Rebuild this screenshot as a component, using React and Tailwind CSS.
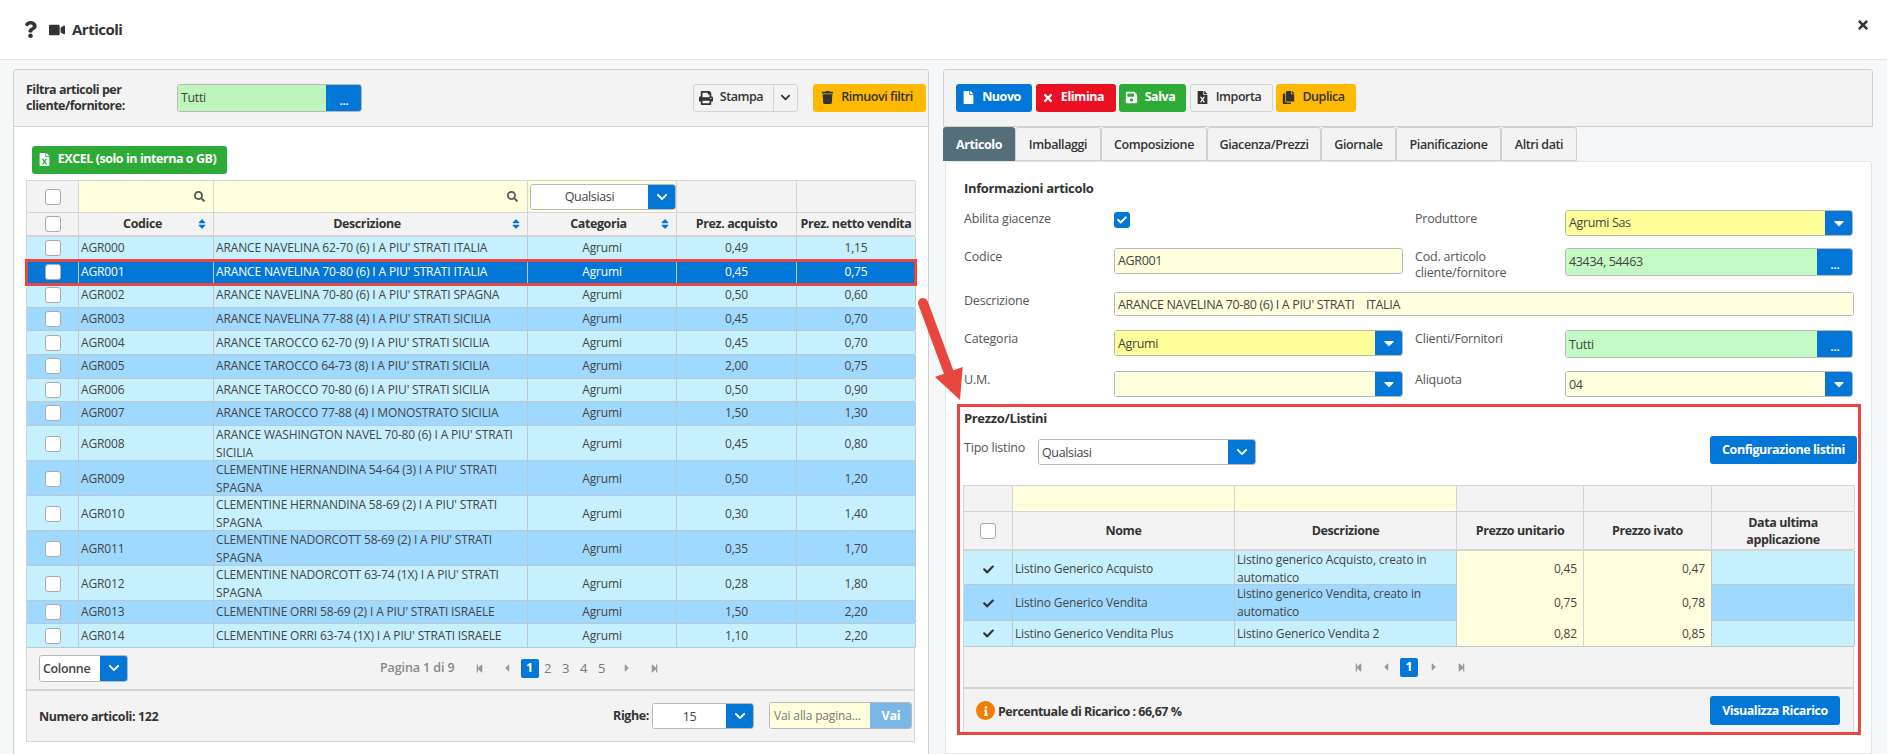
import {
  FaQuestion, FaVideo, FaTimes, FaPrint, FaChevronDown, FaTrash, FaFile, FaSave, FaFileExcel,
  FaCopy, FaSearch, FaSort, FaCheck, FaStepBackward, FaStepForward, FaCaretLeft, FaCaretRight,
  FaCaretDown, FaInfo,
} from 'react-icons/fa'

const articoli = [
  ['AGR000', 'ARANCE NAVELINA 62-70 (6) I A PIU\' STRATI ITALIA', '0,49', '1,15'],
  ['AGR001', 'ARANCE NAVELINA 70-80 (6) I A PIU\' STRATI ITALIA', '0,45', '0,75'],
  ['AGR002', 'ARANCE NAVELINA 70-80 (6) I A PIU\' STRATI SPAGNA', '0,50', '0,60'],
  ['AGR003', 'ARANCE NAVELINA 77-88 (4) I A PIU\' STRATI SICILIA', '0,45', '0,70'],
  ['AGR004', 'ARANCE TAROCCO 62-70 (9) I A PIU\' STRATI SICILIA', '0,45', '0,70'],
  ['AGR005', 'ARANCE TAROCCO 64-73 (8) I A PIU\' STRATI SICILIA', '2,00', '0,75'],
  ['AGR006', 'ARANCE TAROCCO 70-80 (6) I A PIU\' STRATI SICILIA', '0,50', '0,90'],
  ['AGR007', 'ARANCE TAROCCO 77-88 (4) I MONOSTRATO SICILIA', '1,50', '1,30'],
  ['AGR008', 'ARANCE WASHINGTON NAVEL 70-80 (6) I A PIU\' STRATI SICILIA', '0,45', '0,80'],
  ['AGR009', 'CLEMENTINE HERNANDINA 54-64 (3) I A PIU\' STRATI SPAGNA', '0,50', '1,20'],
  ['AGR010', 'CLEMENTINE HERNANDINA 58-69 (2) I A PIU\' STRATI SPAGNA', '0,30', '1,40'],
  ['AGR011', 'CLEMENTINE NADORCOTT 58-69 (2) I A PIU\' STRATI SPAGNA', '0,35', '1,70'],
  ['AGR012', 'CLEMENTINE NADORCOTT 63-74 (1X) I A PIU\' STRATI SPAGNA', '0,28', '1,80'],
  ['AGR013', 'CLEMENTINE ORRI 58-69 (2) I A PIU\' STRATI ISRAELE', '1,50', '2,20'],
  ['AGR014', 'CLEMENTINE ORRI 63-74 (1X) I A PIU\' STRATI ISRAELE', '1,10', '2,20'],
]

const listini = [
  ['Listino Generico Acquisto', 'Listino generico Acquisto, creato in automatico', '0,45', '0,47'],
  ['Listino Generico Vendita', 'Listino generico Vendita, creato in automatico', '0,75', '0,78'],
  ['Listino Generico Vendita Plus', 'Listino Generico Vendita 2', '0,82', '0,85'],
]

const grigliaArticoli = 'grid grid-cols-[52px_135px_314px_149px_120px_119px]'
const grigliaListini = 'grid grid-cols-[49px_222px_222px_127px_128px_143px]'

function Box() {
  return <span className="block w-4 h-4 bg-white border border-[#aaa] rounded-[3px]" />
}

function Btn({ icon, children, className }) {
  return (
    <button className={`h-7 rounded-[3px] flex items-center justify-center gap-[7px] text-[12.5px] font-bold tracking-[-0.45px] ${icon && children ? 'pr-[5px]' : ''} ${className}`}>
      {icon}
      {children}
    </button>
  )
}

function Control({ value, bg = 'bg-[#ffffdd]', btn = 'chevron', className = '', center = false }) {
  return (
    <div className={`flex border border-[#b8b8b8] rounded-[3px] overflow-hidden ${className}`}>
      <div className={`flex-1 flex items-center px-[3px] pt-[2px] text-[#444] text-[12.5px] tracking-[-0.35px] ${bg} ${center ? 'justify-center' : ''}`}>{value}</div>
      {btn === 'chevron' && (
        <div className="w-[28px] -my-px -mr-px bg-[#0277d8] flex items-center justify-center text-white"><FaChevronDown size={12} /></div>
      )}
      {btn === 'caret' && (
        <div className="w-[28px] -my-px -mr-px bg-[#0277d8] flex items-center justify-center text-white"><FaCaretDown size={16} /></div>
      )}
      {btn === 'dots' && (
        <div className="w-[36px] -my-px -mr-px bg-[#0277d8] flex items-end justify-center pb-[6px] text-white text-[11px] font-bold leading-none">...</div>
      )}
    </div>
  )
}

function Pager({ pages }) {
  return (
    <div className="flex items-center text-[#999] text-[13px]">
      <FaStepBackward size={9} className="mr-[17px]" />
      <FaCaretLeft size={12} className="mr-[8px]" />
      <span className="w-[18px] h-[19px] bg-[#0277d8] rounded-[2px] text-white font-bold text-[12.5px] flex items-center justify-center">1</span>
      {pages.map(p => (
        <span key={p} className="w-[18px] text-center text-[#777]">{p}</span>
      ))}
      <FaCaretRight size={12} className="ml-[10px]" />
      <FaStepForward size={9} className="ml-[17px]" />
    </div>
  )
}

function Field({ label, children, className = '' }) {
  return (
    <div className={`flex items-start ${className}`}>
      <span className="w-[150px] shrink-0 text-[12.5px] leading-[16px] pt-px text-[#555] tracking-[-0.2px]">{label}</span>
      {children}
    </div>
  )
}

function Articoli() {
  return (
    <div className="w-[889px] border-t border-l border-[#d5d5d5] text-[12px] text-[#444]">
      <div className={`${grigliaArticoli} h-[32px] border-b border-[#d5d5d5]`}>
        <div className="bg-[#f3f3f3] border-r border-[#d5d5d5] flex items-center justify-center"><Box /></div>
        <div className="bg-[#ffffdd] border-r border-[#d5d5d5] flex items-center justify-end pr-[8px] text-[#555]"><FaSearch size={11} /></div>
        <div className="bg-[#ffffdd] border-r border-[#d5d5d5] flex items-center justify-end pr-[9px] text-[#555]"><FaSearch size={11} /></div>
        <div className="bg-[#ffffdd] border-r border-[#d5d5d5] flex items-center pl-[2px]">
          <Control value="Qualsiasi" bg="bg-white" center className="w-[146px] h-[26px]" />
        </div>
        <div className="bg-[#f3f3f3] border-r border-[#d5d5d5]" />
        <div className="bg-[#f3f3f3] border-r border-[#d5d5d5]" />
      </div>
      <div className={`${grigliaArticoli} h-[24px] border-b-2 border-[#d5d5d5] bg-[#f3f3f3] font-bold text-[12.5px] text-[#333] tracking-[-0.4px]`}>
        <div className="border-r border-[#d5d5d5] flex items-center justify-center"><Box /></div>
        {['Codice', 'Descrizione', 'Categoria'].map(t => (
          <div key={t} className="relative border-r border-[#d5d5d5] flex items-center justify-center pr-[7px]">
            {t}
            <FaSort size={12} className="absolute right-[5px] text-[#0277d8]" />
          </div>
        ))}
        <div className="border-r border-[#d5d5d5] flex items-center justify-center">Prez. acquisto</div>
        <div className="border-r border-[#d5d5d5] flex items-center justify-center">Prez. netto vendita</div>
      </div>
      {articoli.map((r, i) => {
        const selected = i === 1
        const two = r[1].length > 52
        return (
          <div
            key={r[0]}
            className={`${grigliaArticoli} border-b border-[#bcc8d0] ${two ? 'h-[35px]' : 'h-[23.6px]'} ${selected ? 'relative z-10 bg-[#0277d8] text-white outline-[3px] outline-[#e8463f] -outline-offset-1' : i % 2 ? 'bg-[#a0d9ff]' : 'bg-[#c7f0ff]'}`}
          >
            <div className="border-r border-[#bcc8d0] flex items-center justify-center"><Box /></div>
            <div className="border-r border-[#bcc8d0] flex items-center pl-[2px]">{r[0]}</div>
            <div className="border-r border-[#bcc8d0] flex items-center pl-[2px] leading-[18px]">{r[1]}</div>
            <div className="border-r border-[#bcc8d0] flex items-center justify-center">Agrumi</div>
            <div className="border-r border-[#bcc8d0] flex items-center justify-center">{r[2]}</div>
            <div className="border-r border-[#bcc8d0] flex items-center justify-center">{r[3]}</div>
          </div>
        )
      })}
      <div className="h-[43px] bg-[#f3f3f3] border-b-2 border-r border-[#d5d5d5] flex items-center pl-[12px]">
        <Control value={<span className="font-semibold">Colonne</span>} bg="bg-white" className="w-[89px] h-[27px]" />
        <span className="ml-[252px] mr-[20px] text-[12.5px] font-semibold text-[#888] tracking-[-0.1px]">Pagina 1 di 9</span>
        <Pager pages={[2, 3, 4, 5]} />
      </div>
      <div className="h-[51px] bg-[#f3f3f3] border-b border-r border-[#d5d5d5] flex items-center pl-[12px] pr-[2px]">
        <span className="text-[12.5px] font-bold text-[#333] tracking-[-0.4px] whitespace-nowrap pt-[3px]">Numero articoli: 122</span>
        <span className="ml-auto mr-[3px] text-[12.5px] font-bold text-[#333] tracking-[-0.4px]">Righe:</span>
        <Control value="15" bg="bg-white" center className="w-[102px] h-[26px]" />
        <div className="ml-[15px] w-[143px] h-[27px] flex rounded-[3px] overflow-hidden border border-[#b8b8b8]">
          <span className="flex-1 bg-[#ffffdd] flex items-center px-[4px] text-[12px] text-[#777] whitespace-nowrap">Vai alla pagina...</span>
          <span className="w-[42px] shrink-0 -my-px -mr-px bg-[#7ab6e8] text-white font-bold text-[12.5px] flex items-center justify-center">Vai</span>
        </div>
      </div>
    </div>
  )
}

function Listini() {
  return (
    <div className="w-[891px] border-t border-l border-[#d5d5d5] text-[12px] text-[#444]">
      <div className={`${grigliaListini} h-[26px] border-b border-[#d5d5d5]`}>
        <div className="bg-[#f3f3f3] border-r border-[#d5d5d5]" />
        <div className="bg-[#ffffdd] border-r border-[#d5d5d5]" />
        <div className="bg-[#ffffdd] border-r border-[#d5d5d5]" />
        <div className="bg-[#f3f3f3] border-r border-[#d5d5d5]" />
        <div className="bg-[#f3f3f3] border-r border-[#d5d5d5]" />
        <div className="bg-[#f3f3f3] border-r border-[#d5d5d5]" />
      </div>
      <div className={`${grigliaListini} h-[38.7px] border-b-2 border-[#d5d5d5] bg-[#f3f3f3] font-bold text-[12.5px] text-[#333] text-center leading-[17px] tracking-[-0.4px]`}>
        <div className="border-r border-[#d5d5d5] flex items-center justify-center"><Box /></div>
        {['Nome', 'Descrizione', 'Prezzo unitario', 'Prezzo ivato', 'Data ultima applicazione'].map(t => (
          <div key={t} className="border-r border-[#d5d5d5] flex items-center justify-center px-2">{t}</div>
        ))}
      </div>
      {listini.map((r, i) => (
        <div key={r[0]} className={`${grigliaListini} border-b border-[#bcc8d0] ${i === 2 ? 'h-[26px]' : i === 1 ? 'h-[36px]' : 'h-[34.3px]'} ${i % 2 ? 'bg-[#a0d9ff]' : 'bg-[#c7f0ff]'}`}>
          <div className="border-r border-[#bcc8d0] flex items-center justify-center text-[#333]"><FaCheck size={11} /></div>
          <div className="border-r border-[#bcc8d0] flex items-center pl-[2px]">{r[0]}</div>
          <div className="border-r border-[#bcc8d0] flex items-center pl-[2px] leading-[18px]">{r[1]}</div>
          <div className="border-r border-[#d5d5d5] bg-[#ffffdd] flex items-center justify-end pr-[6px]">{r[2]}</div>
          <div className="border-r border-[#bcc8d0] bg-[#ffffdd] flex items-center justify-end pr-[6px]">{r[3]}</div>
          <div className="border-r border-[#bcc8d0]" />
        </div>
      ))}
      <div className="h-[42px] bg-[#f3f3f3] border-b-2 border-r border-[#d5d5d5] flex items-center pl-[390px]">
        <Pager pages={[]} />
      </div>
      <div className="h-[43px] bg-[#f3f3f3] border-r border-[#d5d5d5] flex items-center pl-[12px] pr-[13px]">
        <span className="w-[19px] h-[19px] rounded-full bg-[#f57c00] text-white flex items-center justify-center"><FaInfo size={10} /></span>
        <span className="ml-[3px] pt-[3px] text-[12.5px] font-bold text-[#333] tracking-[-0.5px]">Percentuale di Ricarico : 66,67 %</span>
        <Btn className="ml-auto w-[130px] h-[29px] bg-[#0277d8] text-white">Visualizza Ricarico</Btn>
      </div>
    </div>
  )
}

export default function App() {
  const tabs = [
    ['Imballaggi', 'w-[86px]'],
    ['Composizione', 'w-[106px]'],
    ['Giacenza/Prezzi', 'w-[114px]'],
    ['Giornale', 'w-[75px]'],
    ['Pianificazione', 'w-[105px]'],
    ['Altri dati', 'w-[76px]'],
  ]

  return (
    <div className="relative w-[1890px] h-[754px] overflow-hidden bg-white font-['Open_Sans',sans-serif] tracking-[-0.15px]">
      <div className="w-[1887px] h-[754px] flex flex-col">
        {/* Header */}
        <div className="h-[60px] shrink-0 border-b border-[#dfe5ea] flex items-center pl-[22px] pr-[17px] text-[#333]">
          <FaQuestion size={17} />
          <FaVideo size={16} className="ml-[10px]" />
          <span className="ml-[7px] text-[15px] font-bold tracking-[-0.5px]">Articoli</span>
          <FaTimes size={14} className="ml-auto -mt-[10px]" />
        </div>

        <div className="flex-1 bg-[#f5f7f9] flex pl-[13px] pt-[8.5px] gap-[14px]">
          {/* Colonna sinistra */}
          <div className="w-[916px] flex flex-col">
            <div className="h-[58px] shrink-0 bg-[#f3f3f3] border border-[#d0d0d0] rounded-t-[3px] flex items-center pl-[12px] pr-[2px]">
              <span className="w-[151px] text-[12.5px] font-bold leading-[16px] text-[#333] tracking-[-0.5px]">Filtra articoli per<br />cliente/fornitore:</span>
              <Control value="Tutti" bg="bg-[#bdf5bd]" btn="dots" className="w-[185px] h-7" />
              <Btn icon={<FaPrint size={14} />} className="ml-auto w-[81px] border border-[#d5d5d5] font-semibold text-[#333] rounded-r-none">Stampa</Btn>
              <Btn icon={<FaChevronDown size={11} />} className="w-[25px] -ml-px border border-[#d5d5d5] text-[#333] rounded-l-none" />
              <Btn icon={<FaTrash size={13} />} className="ml-[15px] w-[113px] bg-[#ffb900] text-[#333] font-semibold">Rimuovi filtri</Btn>
            </div>
            <div className="flex-1 bg-white border-x border-[#d0d0d0] pt-[19px] pl-[12px]">
              <Btn icon={<FaFileExcel size={13} />} className="ml-[6px] w-[195px] bg-[#2eaa36] text-white mb-[6.5px]">EXCEL (solo in interna o GB)</Btn>
              <Articoli />
            </div>
          </div>

          {/* Colonna destra */}
          <div className="w-[930px] flex flex-col">
            <div className="h-[58px] shrink-0 bg-[#f3f3f3] border border-[#d0d0d0] rounded-t-[3px] flex items-center gap-[3.5px] pl-[12px]">
              <Btn icon={<FaFile size={13} />} className="w-[76px] bg-[#0277d8] text-white">Nuovo</Btn>
              <Btn icon={<FaTimes size={12} />} className="w-[80px] bg-[#ea1022] text-white">Elimina</Btn>
              <Btn icon={<FaSave size={13} />} className="w-[67px] bg-[#2eaa36] text-white">Salva</Btn>
              <Btn icon={<FaFileExcel size={13} />} className="w-[83px] border border-[#d5d5d5] text-[#333] font-semibold">Importa</Btn>
              <Btn icon={<FaCopy size={13} />} className="w-[80px] bg-[#ffb900] text-[#333] font-semibold">Duplica</Btn>
            </div>

            <div className="h-[34px] shrink-0 flex text-[12.5px] font-semibold text-[#333] tracking-[-0.4px]">
              <span className="w-[72px] pt-[3px] bg-[#546e7a] text-white font-bold rounded-t-[3px] flex items-center justify-center">Articolo</span>
              {tabs.map(([t, w]) => (
                <span key={t} className={`${w} pt-[3px] bg-[#f3f3f3] border border-[#d0d0d0] rounded-t-[3px] flex items-center justify-center`}>{t}</span>
              ))}
            </div>

            <div className="ml-[2px] mr-px flex-1 bg-white border border-[#e3e6e8] rounded-t-[3px] pt-[17px] pl-[18px]">
              <h3 className="text-[13px] font-bold leading-[18px] text-[#333] mb-[13px] tracking-[-0.35px]">Informazioni articolo</h3>

              <div className="flex h-[38px] items-start">
                <Field label="Abilita giacenze" className="w-[451px]">
                  <span className="mt-[2px] w-4 h-4 bg-[#0277d8] rounded-[3px] flex items-center justify-center text-white"><FaCheck size={10} /></span>
                </Field>
                <Field label="Produttore">
                  <Control value="Agrumi Sas" bg="bg-[#ffff99]" btn="caret" className="w-[288px] h-[26px]" />
                </Field>
              </div>
              <div className="flex h-[44.7px] items-start">
                <Field label="Codice" className="w-[451px]">
                  <Control value="AGR001" btn="none" className="w-[289px] h-[26px]" />
                </Field>
                <Field label={<>Cod. articolo<br />cliente/fornitore</>}>
                  <Control value="43434, 54463" bg="bg-[#c4fbc4]" btn="dots" className="w-[288px] h-[28px]" />
                </Field>
              </div>
              <div className="h-[38.3px]">
                <Field label="Descrizione">
                  <Control value="ARANCE NAVELINA 70-80 (6) I A PIU' STRATI    ITALIA" btn="none" className="w-[740px] h-[24px] whitespace-pre" />
                </Field>
              </div>
              <div className="flex h-[40.7px] items-start">
                <Field label="Categoria" className="w-[451px]">
                  <Control value="Agrumi" bg="bg-[#ffff99]" btn="caret" className="w-[289px] h-[26px]" />
                </Field>
                <Field label="Clienti/Fornitori">
                  <Control value="Tutti" bg="bg-[#c4fbc4]" btn="dots" className="w-[288px] h-[28px]" />
                </Field>
              </div>
              <div className="flex h-[33.3px] items-start">
                <Field label="U.M." className="w-[451px]">
                  <Control value="" btn="caret" className="w-[289px] h-[26px]" />
                </Field>
                <Field label="Aliquota">
                  <Control value="04" btn="caret" className="w-[288px] h-[26px]" />
                </Field>
              </div>

              {/* Prezzo/Listini */}
              <div className="-ml-[7px] w-[904px] h-[331px] border-[3px] border-[#e8463f] pl-[3px] pr-[1px] pt-[2px]">
                <h3 className="pl-[1px] text-[13px] font-bold leading-[18px] text-[#333] tracking-[-0.35px]">Prezzo/Listini</h3>
                <div className="flex items-start mt-[9px] mb-[20px]">
                  <span className="w-[75px] pl-[1px] pt-[3px] text-[12.5px] text-[#555] tracking-[-0.2px]">Tipo listino</span>
                  <Control value="Qualsiasi" bg="bg-white" className="mt-[3px] w-[218px] h-[26px]" />
                  <Btn className="ml-auto w-[147px] h-[28px] bg-[#0277d8] text-white">Configurazione listini</Btn>
                </div>
                <Listini />
              </div>
            </div>
          </div>
        </div>
      </div>

      {/* Freccia rossa */}
      <svg className="absolute left-[915px] top-[295px] pointer-events-none" width="55" height="112" viewBox="915 295 55 112">
        <path d="M923 303 L949 373" stroke="#e8463f" strokeWidth="10" strokeLinecap="round" fill="none" />
        <path d="M935 377 L962.7 367 L960 400 Z" fill="#e8463f" />
      </svg>
    </div>
  )
}
